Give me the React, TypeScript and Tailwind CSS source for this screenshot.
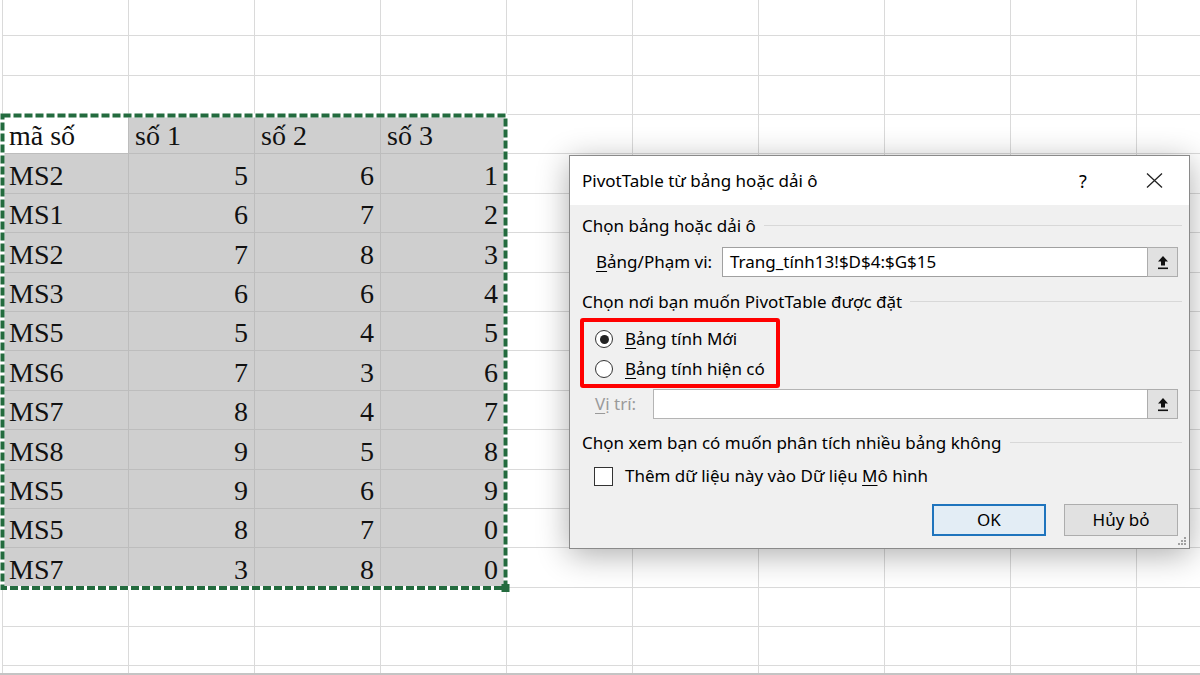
import React from "react";

const data: [string, number, number, number][] = [
  ["MS2", 5, 6, 1],
  ["MS1", 6, 7, 2],
  ["MS2", 7, 8, 3],
  ["MS3", 6, 6, 4],
  ["MS5", 5, 4, 5],
  ["MS6", 7, 3, 6],
  ["MS7", 8, 4, 7],
  ["MS8", 9, 5, 8],
  ["MS5", 9, 6, 9],
  ["MS5", 8, 7, 0],
  ["MS7", 3, 8, 0],
];

const headers = ["mã số", "số 1", "số 2", "số 3"];

function Sheet() {
  const rows: React.ReactNode[] = [];
  for (let r = 0; r < 18; r++) {
    const cells: React.ReactNode[] = [];
    for (let c = 0; c < 10; c++) {
      if (r === 3 && c < 4) {
        cells.push(
          <div
            key={c}
            className={
              c === 0
                ? "h-[39.4px] w-[126px] shrink-0 border-r border-b border-[#bdbdbd] bg-white flex items-end pb-[3px] pl-[6px] leading-none"
                : "h-[39.4px] w-[126px] shrink-0 border-r border-b border-[#bdbdbd] bg-[#cfcfcf] flex items-end pb-[3px] pl-[6px] leading-none"
            }
          >
            {headers[c]}
          </div>
        );
      } else if (r >= 4 && r <= 14 && c < 4) {
        const row = data[r - 4];
        cells.push(
          <div
            key={c}
            className={
              c === 0
                ? "h-[39.4px] w-[126px] shrink-0 border-r border-b border-[#bdbdbd] bg-[#cfcfcf] flex items-end pb-[3px] pl-[6px] leading-none"
                : c === 3
                ? "h-[39.4px] w-[126px] shrink-0 border-r border-b border-[#bdbdbd] bg-[#cfcfcf] flex items-end justify-end pb-[3px] pr-[8px] leading-none"
                : "h-[39.4px] w-[126px] shrink-0 border-r border-b border-[#bdbdbd] bg-[#cfcfcf] flex items-end justify-end pb-[3px] pr-[6px] leading-none"
            }
          >
            {row[c]}
          </div>
        );
      } else {
        cells.push(
          <div
            key={c}
            className="h-[39.4px] w-[126px] shrink-0 border-r border-b border-[#dadada]"
          />
        );
      }
    }
    rows.push(
      <div key={r} className="flex">
        {cells}
      </div>
    );
  }
  return (
    <div className="ml-[2px] mt-[-3.2px] border-l border-[#dadada] font-['Liberation_Serif',serif] text-[28px] text-[#111]">
      {rows}
    </div>
  );
}

function UpButton() {
  return (
    <div className="w-[31px] h-[30px] shrink-0 bg-[#e1e1e1] border border-[#adadad] flex items-center justify-center">
      <svg width="12" height="15" viewBox="0 0 12 15">
        <path d="M6 1 L1 6.5 L4 6.5 L4 10.5 L8 10.5 L8 6.5 L11 6.5 Z" fill="#111" />
        <rect x="1" y="12.5" width="10" height="1.6" fill="#111" />
      </svg>
    </div>
  );
}

function SectionTitle({ text }: { text: string }) {
  return (
    <div className="flex items-center h-[22px] pl-[2px]">
      <span className="leading-[22px] whitespace-nowrap">{text}</span>
      <div className="flex-1 h-px bg-[#d8d8d8] ml-[8px] mt-[-2px]" />
    </div>
  );
}

function Dialog() {
  return (
    <div className="absolute left-[569px] top-[155px] w-[621px] h-[394px] border border-[#8a8a8a] bg-[#f0f0f0] shadow-[0_6px_30px_rgba(0,0,0,0.32)] flex flex-col font-['Noto_Sans',sans-serif] text-[17px] text-black">
      <div className="h-[49px] bg-white flex items-center pl-[12px] shrink-0">
        <span className="flex-1 leading-[22px] whitespace-nowrap">PivotTable từ bảng hoặc dải ô</span>
        <span className="w-[24px] text-center text-[18px] leading-[22px]">?</span>
        <span className="w-[24px] ml-[47px] mr-[23px] flex justify-center">
          <svg width="17" height="15" viewBox="0 0 17 15">
            <path d="M1 0.5 L16 14.5 M16 0.5 L1 14.5" stroke="#222" strokeWidth="1.3" fill="none" />
          </svg>
        </span>
      </div>
      <div className="flex-1 pl-[10px] pr-[7px] pt-[10px] relative">
        <SectionTitle text="Chọn bảng hoặc dải ô" />
        <div className="mt-[10px] flex items-center h-[30px] pl-[16px] mr-[4px]">
          <span className="w-[126px] shrink-0 leading-[22px] whitespace-nowrap">
            <span className="underline underline-offset-[3px] decoration-1">B</span>ảng/Phạm vi:
          </span>
          <div className="flex-1 h-[30px] bg-white border border-[#a0a0a0] border-r-0 pl-[7px] flex items-center leading-[22px] whitespace-nowrap">
            Trang_tính13!$D$4:$G$15
          </div>
          <UpButton />
        </div>
        <div className="mt-[14px]">
          <SectionTitle text="Chọn nơi bạn muốn PivotTable được đặt" />
        </div>
        <div className="mt-[5px] w-[200px] h-[70px] border-4 border-[#ff0000] rounded-[3px] pl-[11px] pt-[2px]">
          <div className="h-[30px] flex items-center">
            <div className="w-[18px] h-[18px] rounded-full border border-[#333] bg-white flex items-center justify-center shrink-0">
              <div className="w-[9px] h-[9px] rounded-full bg-[#222]" />
            </div>
            <span className="ml-[12px] leading-[22px] whitespace-nowrap">
              <span className="underline underline-offset-[3px] decoration-1">B</span>ảng tính Mới
            </span>
          </div>
          <div className="h-[30px] flex items-center">
            <div className="w-[18px] h-[18px] rounded-full border border-[#333] bg-white shrink-0" />
            <span className="ml-[12px] leading-[22px] whitespace-nowrap">
              <span className="underline underline-offset-[3px] decoration-1">B</span>ảng tính hiện có
            </span>
          </div>
        </div>
        <div className="mt-[1px] flex items-center h-[30px] pl-[15px] mr-[4px]">
          <span className="w-[58px] shrink-0 leading-[22px] whitespace-nowrap text-[#9a9a9a]">
            <span className="underline underline-offset-[3px] decoration-1">V</span>ị trí:
          </span>
          <div className="flex-1 h-[30px] bg-white border border-[#b4b4b4] border-r-0" />
          <UpButton />
        </div>
        <div className="mt-[13px]">
          <SectionTitle text="Chọn xem bạn có muốn phân tích nhiều bảng không" />
        </div>
        <div className="mt-[10px] h-[24px] flex items-center pl-[14px]">
          <div className="w-[19px] h-[19px] border border-[#333] bg-white shrink-0" />
          <span className="ml-[12px] leading-[22px] whitespace-nowrap">
            Thêm dữ liệu này vào Dữ liệu <span className="underline underline-offset-[3px] decoration-1">M</span>ô hình
          </span>
        </div>
        <div className="mt-[16px] h-[32px] flex justify-end gap-[18px] mr-[4px]">
          <div className="w-[114px] h-[32px] border-2 border-[#1f74bd] bg-[#e3edf5] flex items-center justify-center leading-[22px]">
            OK
          </div>
          <div className="w-[114px] h-[32px] border border-[#adadad] bg-[#e1e1e1] flex items-center justify-center leading-[22px]">
            Hủy bỏ
          </div>
        </div>
        <svg className="absolute right-[2px] bottom-[2px]" width="10" height="10" viewBox="0 0 10 10">
          <rect x="7" y="1" width="2" height="2" fill="#a0a0a0" />
          <rect x="4" y="4" width="2" height="2" fill="#a0a0a0" />
          <rect x="7" y="4" width="2" height="2" fill="#a0a0a0" />
          <rect x="1" y="7" width="2" height="2" fill="#a0a0a0" />
          <rect x="4" y="7" width="2" height="2" fill="#a0a0a0" />
          <rect x="7" y="7" width="2" height="2" fill="#a0a0a0" />
        </svg>
      </div>
    </div>
  );
}

export default function App() {
  return (
    <div className="relative w-[1200px] h-[675px] overflow-hidden bg-white">
      <Sheet />
      <svg className="absolute left-0 top-[112px]" width="514" height="482" viewBox="0 0 514 482">
        <rect x="2.5" y="3.5" width="503" height="472.5" fill="none" stroke="#ffffff" strokeWidth="4" />
        <rect x="2.5" y="3.5" width="503" height="472.5" fill="none" stroke="#236b3e" strokeWidth="4" strokeDasharray="8 3" />
        <rect x="501.5" y="472" width="8" height="8" fill="#236b3e" />
      </svg>
      <Dialog />
      <div className="absolute left-0 right-0 bottom-0 h-[2px] bg-[#c4c4c4]" />
    </div>
  );
}
